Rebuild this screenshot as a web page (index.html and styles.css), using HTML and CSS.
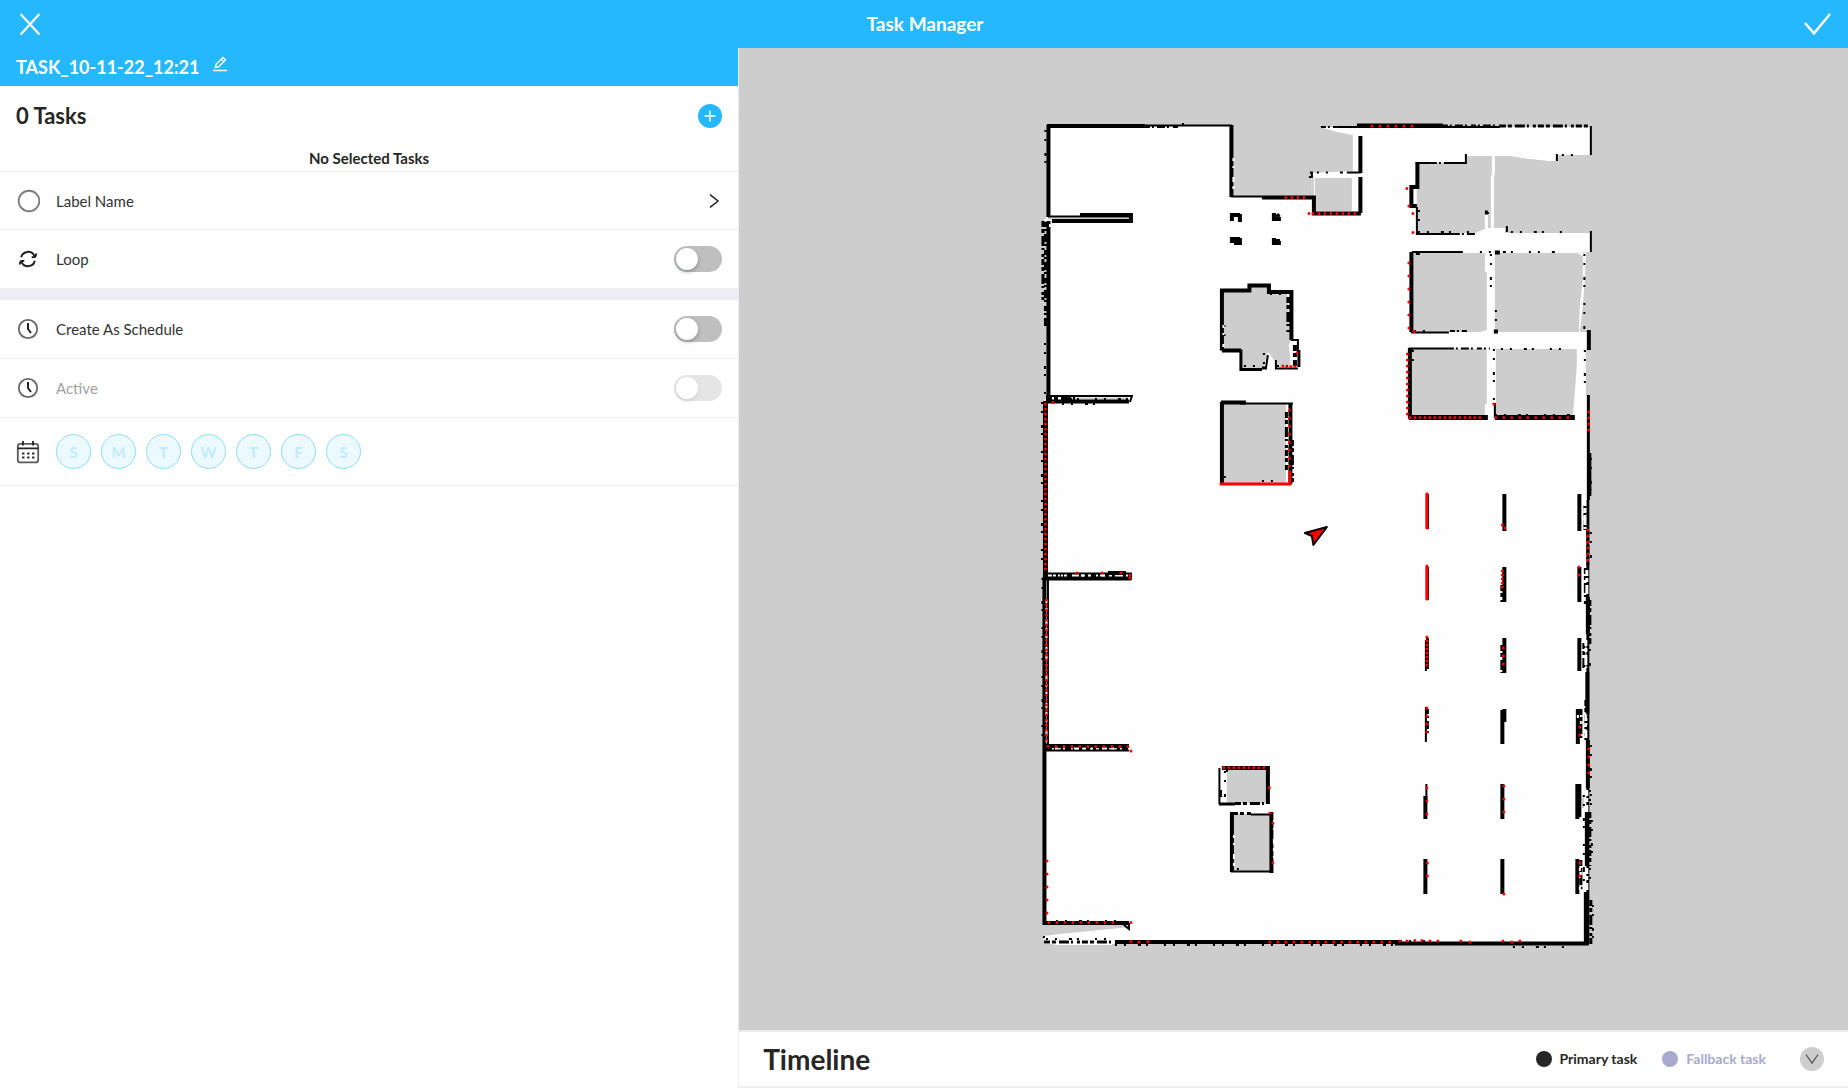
FILE: index.html
```html
<!DOCTYPE html>
<html lang="en">
<head>
<meta charset="utf-8">
<meta name="viewport" content="width=device-width, initial-scale=1">
<title>Task Manager</title>
<link rel="stylesheet" href="styles.css">
</head>
<body>
<header class="topbar">
  <button class="icon-btn" type="button" aria-label="Close">
    <svg width="24" height="24" viewBox="0 0 24 24" fill="none" stroke="currentColor" stroke-width="2.200"><path d="M2.600 2 21.400 22.500M21.400 2 2.600 22.500"/></svg>
  </button>
  <h1 class="topbar-title">Task Manager</h1>
  <button class="icon-btn icon-btn-end" type="button" aria-label="Save">
    <svg width="28" height="24" viewBox="0 0 28 24" fill="none" stroke="currentColor" stroke-width="2.500"><path d="M1 11 10 21.300 26 2"/></svg>
  </button>
</header>

<main class="workspace">
  <section class="panel">
    <div class="task-name">
      <h2 class="task-name-text">TASK_10-11-22_12:21</h2>
      <button class="icon-btn edit-btn" type="button" aria-label="Rename task">
        <svg width="16" height="16" viewBox="0 0 16 16" fill="none" stroke="currentColor" stroke-width="1.300"><path d="M1 14.500H15M3.300 11.500 4.200 8.200 11 1.500 13.500 3.800 6.700 10.600ZM9.300 3.300 11.700 5.600"/></svg>
      </button>
    </div>

    <div class="tasks-head">
      <h3 class="tasks-count">0 Tasks</h3>
      <button class="add-btn" type="button" aria-label="Add task">
        <svg width="12" height="12" viewBox="0 0 12 12" fill="none" stroke="currentColor" stroke-width="1.400"><path d="M6 .5V11.500M.5 6H11.500"/></svg>
      </button>
    </div>
    <p class="tasks-empty">No Selected Tasks</p>

    <a class="row" href="#label">
      <span class="row-icon"><svg width="24" height="24" viewBox="0 0 24 24" fill="none" stroke="#808080" stroke-width="1.900"><circle cx="13" cy="12" r="10.300"/></svg></span>
      <span class="row-label">Label Name</span>
      <svg class="chevron" width="12" height="16" viewBox="0 0 12 16" fill="none" stroke="currentColor" stroke-width="1.500"><path d="M2 1.600 10 8 2 14.400"/></svg>
    </a>
    <div class="row">
      <span class="row-icon"><svg width="24" height="24" viewBox="0 0 24 24" fill="none" stroke="#222" stroke-width="2"><path d="M5.200 10.300A7 7 0 0 1 18.500 9.200M18.800 13.700A7 7 0 0 1 5.500 14.800M15.700 10.200 19.200 9.800 20.500 6.500M8.300 13.800 4.800 14.200 3.500 17.500"/></svg></span>
      <label class="row-label" for="loop">Loop</label>
      <input class="switch" id="loop" type="checkbox">
    </div>
    <div class="band"></div>
    <div class="row row-line">
      <span class="row-icon"><svg width="24" height="24" viewBox="0 0 24 24" fill="none"><circle cx="12" cy="12" r="9.200" stroke="#66666b" stroke-width="1.800"/><path d="M12 6V12L15 16" stroke="#222" stroke-width="2"/></svg></span>
      <label class="row-label" for="schedule">Create As Schedule</label>
      <input class="switch" id="schedule" type="checkbox">
    </div>
    <div class="row row-line">
      <span class="row-icon"><svg width="24" height="24" viewBox="0 0 24 24" fill="none"><circle cx="12" cy="12" r="9.200" stroke="#66666b" stroke-width="1.800"/><path d="M12 6V12L15 16" stroke="#222" stroke-width="2"/></svg></span>
      <label class="row-label row-label-off" for="active">Active</label>
      <input class="switch" id="active" type="checkbox" disabled>
    </div>
    <div class="row row-days">
      <span class="row-icon"><svg width="24" height="24" viewBox="0 0 24 24" fill="none"><rect x="1.800" y="3.800" width="20.400" height="18.600" rx="2.500" stroke="#5a5a5f" stroke-width="1.800"/><path d="M1.500 8.300H22.500M7 1V5.500M17 1V5.500" stroke="#222" stroke-width="1.800"/><path d="M6 13.500H8.500M11 13.500H13.500M16 13.500H18.500M6 17.500H8.500M11 17.500H13.500M16 17.500H18.500" stroke="#333" stroke-width="2"/></svg></span>
      <div class="days">
        <button class="day" type="button" disabled>S</button>
        <button class="day" type="button" disabled>M</button>
        <button class="day" type="button" disabled>T</button>
        <button class="day" type="button" disabled>W</button>
        <button class="day" type="button" disabled>T</button>
        <button class="day" type="button" disabled>F</button>
        <button class="day" type="button" disabled>S</button>
      </div>
    </div>
  </section>

  <section class="stage">
    <div class="map">
      <svg class="map-svg" viewBox="739 48 1109 982" fill="none" role="img" aria-label="Floor map">
        <!-- free space -->
        <path class="free" d="M1048 126H1232V197H1312V173L1353 171V135L1337 132 1320 127H1591V155H1557V161L1548 161 1528 159 1509 156H1466V163H1417V233H1591V252H1577L1586 253V256L1585 280 1583 305 1580 332H1591V349H1586V395L1589 397V944H1044V937L1054 935 1083 932 1129 927 1128 924H1045V578H1044V400L1048 396V222L1044 220 1048 216Z"/>
        <path class="free" d="M1312 173H1361V214H1312ZM1353 135H1361V173H1353ZM1044 936 1060 934 1112 929V945H1056L1044 942Z"/>

        <!-- unknown space inside the free area -->
        <g class="unknown">
          <path d="M1315 178H1352V211H1315Z"/>
          <path d="M1417 164H1466V156H1493V175L1491 176V228L1488 228V212H1485V229L1475 232H1417Z"/>
          <path d="M1495 156H1509L1528 159 1548 161H1557V155L1591 155V232H1505V227L1494 228 1495 175Z"/>
          <path d="M1413 253H1485V271L1487 273V330L1480 332H1413Z"/>
          <path d="M1495 253H1577L1583 256V280L1580 305 1579 332H1495Z"/>
          <path d="M1411 349H1487V403L1485 405V416H1411Z"/>
          <path d="M1496 349H1577V365L1575 391 1573 416H1496Z"/>
          <path d="M1222 290H1249V285H1269V291H1287L1291 340 1289 345 1291 367H1276L1275 361 1268 352 1264 368H1242V350H1222Z"/>
          <path d="M1222 403H1286V483H1222Z"/>
          <path d="M1227 770H1267V803H1227ZM1234 814H1270V871H1234Z"/>
        </g>
        <path class="free" d="M1492 155H1495V175L1494 177V228H1505V233H1475L1485 229V212H1488V228H1491V176L1492 174Z"/>
        <path class="shade" d="M1048 218.500H1129M1064 398.500H1128M1054 749H1118M1313 178V196M1581 520V525M1582 710V725M1583 795V808M1582 870V890"/>

        <!-- west wing walls -->
        <path class="w4" d="M1048.500 125V217M1048.500 221V396M1044.500 577V925"/>
        <path class="w5" d="M1045.500 401V578"/>
        <path class="w4" d="M1047 126H1145M1046 401.500H1129M1046 578.500H1131M1046 746H1129M1044 923H1129"/>
        <path class="w4" d="M1080 215H1131V221H1052"/>
        <path class="w2" d="M1145 125.500H1232M1048 216.500H1131M1046 396H1132L1130 402M1048 573.500H1131V580M1046 750.500H1129M1129 923V929L1124 925M1048 577V746M1183 123V125"/>
        <path class="w2 d-a" d="M1145 127H1180M1232 155V190"/>
        <path class="w2 d-c" d="M1045.500 130V170"/>
        <path class="w3 d-b" d="M1043 221V300"/>
        <path class="w3 d-a" d="M1045.500 222V327"/>
        <path class="w2 d-c" d="M1045 343V396M1042 402V570M1042.500 578V746M1046 399H1130M1062 404H1104"/>
        <path class="w4 d-b" d="M1046 399H1078M1052 575H1129M1046 749H1128"/>
        <path class="white2 d-d" d="M1053 575.500H1122M1055 748.500H1118M1046.500 600V742M1050 224V232"/>
        <path class="w4" d="M1231.500 125V197M1108 573H1126"/>
        <path class="white2 d-d" d="M1233.500 158V194"/>

        <!-- south wall -->
        <path class="w4" d="M1115 942H1400"/>
        <path class="w4" d="M1395 943.500H1589"/>
        <path class="w3 d-b" d="M1044 942H1115"/>
        <path class="w2 d-c" d="M1044 936V944M1046 939H1112M1115 945H1400M1056 921H1128M1400 941H1425M1513 947H1570"/>

        <!-- central columns and rooms -->
        <path class="w4" d="M1230 215H1240M1232 213V221M1240 214V222M1230 239H1240M1232 237V243M1234 243H1242M1240 238V244M1274 213V219H1281M1277 214 1279 217M1274 238V243H1281M1276 241H1280"/>
        <path class="w4" d="M1222 350V290.500H1249.500V285.500H1269V292H1291.500V340"/>
        <path class="w2" d="M1291 340H1298V353M1220 349.500H1241M1276 360V368.500H1298M1266 368 1268 355"/>
        <path class="w3" d="M1222 351H1241V369.500H1262M1262 368H1267M1299 350V367"/>
        <path class="w4 d-b" d="M1288.500 297V332M1295 345V366"/>
        <path class="w2 d-c" d="M1224.500 325V348M1244 366H1266M1264 353V367M1277 366H1296M1270 294H1285"/>
        <path class="white2 d-d" d="M1223.500 325V347"/>
        <path class="w4" d="M1222 402V484M1221 402.500H1246M1290.500 404V484"/>
        <path class="w2" d="M1240 403.500H1293"/>
        <path class="white2 d-d" d="M1287.500 408V470"/>
        <path class="w3 d-b" d="M1286.500 412V470M1292.500 440V482"/>
        <path class="w2 d-c" d="M1262 481H1285M1225 476V482"/>
        <path class="w4" d="M1222 768H1270M1268 768V804M1232 812V872M1271.500 812V873"/>
        <path class="w2" d="M1219.500 768V804M1251 814.500H1271M1231 871.500H1272"/>
        <path class="w3" d="M1219 804H1235M1221 790V797"/>
        <path class="w3 d-b" d="M1235 803.500H1268M1232 813.500H1251"/>
        <path class="white3 d-b" d="M1223.500 771V801"/>
        <path class="white2 d-d" d="M1234 835V870M1274 820V862"/>
        <path class="w2 d-c" d="M1225 771V801M1226 771H1233M1238 868V871"/>

        <!-- north-east rooms -->
        <path class="w2" d="M1337 127H1500M1591 126V155M1557 154V161M1591 231V252M1466 154V163H1445M1347 172.500H1361M1231 196.500H1262M1455 234H1417V207M1412 252H1463M1411 332.500H1449M1409 348.500H1449M1507 226V232M1495 403V418"/>
        <path class="w4" d="M1357 125.500H1443M1360.500 136V173M1360.500 177V213M1262 197.500H1314V213.500H1361M1417.500 162V187H1411.500V206H1417M1411.500 252V332M1410 348V419M1589 330V350"/>
        <path class="w5" d="M1409 417.500H1488M1495 417.500H1575"/>
        <path class="w2" d="M1416 163H1432M1416 254H1420M1410 350H1413M1310 172.500H1312V177H1309"/>
        <path class="w2 d-a" d="M1321 127H1337M1443 125.500H1500M1432 163H1466M1455 234H1477M1449 348.500H1490M1450 331H1467"/>
        <path class="w3 d-b" d="M1500 126H1588"/>
        <path class="w2 d-c" d="M1317 172.500H1346M1562 155H1579M1419 210V234M1418 232H1475M1511 232H1566M1480 252H1556M1414 331H1432M1413 350V370M1501 349H1572M1491 254V292M1496 310V330M1494 349V403M1584.500 254V330M1585 350V395M1488 212V216M1495 415H1575"/>
        <path class="w4" d="M1494 331.500H1498M1495 252.500H1500M1485 212.500H1488"/>

        <!-- racks -->
        <path class="w3" d="M1427.500 494V529M1427.500 567V600M1427.500 638V669"/>
        <path class="w2" d="M1426 640V671M1426 707V742M1426.500 784V800"/>
        <path class="w2 d-a" d="M1428 709V736"/>
        <path class="w4" d="M1504.500 494V531M1504.500 567V602M1504.500 638V673M1502.500 710V744M1504.500 709V722M1502.500 784V819M1502.500 859V894M1425.500 796V819M1425.500 859V894M1579.500 494V531M1579.500 567V602M1579.500 638V671M1578 709V744M1579.500 784V817M1577.500 784V819M1577.500 859V894"/>
        <path class="w3 d-b" d="M1502 585V602M1502 645V673M1581 709V740M1581 860V892"/>
        <path class="white2 d-d" d="M1578 715V722M1580 868V890"/>

        <!-- east wall -->
        <path class="w3" d="M1588.500 395V500M1588 500V944"/>
        <path class="w4" d="M1589.500 453V496M1588 597V634M1587.500 672V713M1588 740V788M1587 812V866M1586 892V944"/>
        <path class="w3 d-b" d="M1588 530V565M1585 505V530M1585.500 568V604M1590 600V645M1584 643V668M1586 700V740M1590 812V866M1591 900V944"/>
        <path class="white3 d-b" d="M1585 500V530M1587 570V594M1586 640V668M1586 715V738M1587 790V812M1587 868V890"/>
        <path class="w2 d-c" d="M1591 458V490M1591 532V562M1590 640V670M1588 716V742M1591 745V812M1590 790V812M1584 795V870M1590 868V890M1584 870V890M1592 820V860M1593 905V940"/>

        <!-- laser hits -->
        <path class="hit s5" d="M1045.500 404V570M1046.500 600V744"/>
        <path class="hit s8" d="M1048 746.500H1129M1049 922.500H1121M1270 942H1392"/>
        <path class="hit s6" d="M1313 213.500H1356M1286 197.500H1306M1407.500 354V418M1589 412V432M1588 530V564"/>
        <path class="hit s8" d="M1372 126H1418M1496 417.500H1570"/>
        <path class="hit s5" d="M1410 417.500H1484M1224 767.500H1269"/>
        <path class="hit s13" d="M1409 263V333M1047 861V914"/>
        <path class="hit s8" d="M1289.500 410V470"/>
        <path class="hit-line" d="M1221 484H1290V472M1427 494V528M1427 566V599"/>
        <path class="hit s4" d="M1427 637V669M1502.500 571V588"/>
        <path class="hit s8" d="M1427 708V740M1503.500 648V670M1589 749V775M1579 567V578M1580 727V736"/>
        <path class="hit s13" d="M1427 788V816M1504 786V818M1427.500 863V888M1580 863V878"/>
        <path class="hit" d="M1053 402.500h0M1077 573h0M1102 573h0M1121 573h0M1130 575h0M1130 578h0M1131 751h0M1131 922.500h0M1131 941.500h0M1139 942h0M1148 941.500h0M1400 941h0M1407 941h0M1415 940.500h0M1422 940.500h0M1430 941h0M1438 941h0M1461 941h0M1470 942h0M1503 941h0M1512 942h0M1520 941h0M1297 353h0M1283 366h0M1287 367h0M1291 366.500h0M1295 366.500h0M1309 213.500h0M1407 188.500h0M1409 206h0M1413 213.500h0M1413 232.500h0M1414 331.500h0M1494 404h0M1502.500 525h0M1505 528h0M1504 894h0M1269.500 787.500h0M1270 813h0M1273 823h0M1273 863h0"/>

        <!-- robot -->
        <path class="robot" d="M1305 533 1327 527 1313.500 545 1312 536Z"/>
      </svg>
    </div>
    <footer class="timeline">
      <h2 class="timeline-title">Timeline</h2>
      <ul class="legend">
        <li class="legend-item"><span class="dot"></span>Primary task</li>
        <li class="legend-item legend-fallback"><span class="dot"></span>Fallback task</li>
      </ul>
      <button class="collapse-btn" type="button" aria-label="Collapse timeline">
        <svg width="14" height="12" viewBox="0 0 14 12" fill="none" stroke="currentColor" stroke-width="1.300"><path d="M1 1.500 7 10 13 1.500"/></svg>
      </button>
    </footer>
  </section>
</main>
</body>
</html>
```
FILE: styles.css
```css
*, *::before { box-sizing: border-box; }

body {
  margin: 0;
  min-height: 100vh;
  display: flex;
  flex-direction: column;
  background: #fff;
  color: #262626;
  font: 15px/24px Lato, "Noto Sans", sans-serif;
}

h1, h2, h3, p, ul { margin: 0; padding: 0; }
button { font: inherit; color: inherit; border: 0; padding: 0; background: none; cursor: pointer; }
svg { display: block; flex: none; }

.topbar {
  display: grid;
  grid-template-columns: 1fr auto 1fr;
  align-items: center;
  height: 48px;
  padding: 0 16px 0 18px;
  background: #25b8ff;
  color: #fff;
}
.topbar-title { font-size: 19px; font-weight: 700; line-height: 24px; }
.icon-btn { display: flex; justify-self: start; }
.icon-btn-end { justify-self: end; }

.workspace { flex: 1; display: flex; }

.panel {
  width: 40%;
  border-right: 1px solid #ededf3;
}
.task-name {
  display: flex;
  align-items: center;
  gap: 12px;
  height: 38px;
  padding: 0 16px;
  background: #25b8ff;
  color: #fff;
}
.task-name-text { font-size: 18px; font-weight: 700; line-height: 24px; }
.edit-btn { padding-bottom: 6px; }

.tasks-head {
  display: flex;
  align-items: center;
  justify-content: space-between;
  height: 60px;
  padding: 0 16px;
}
.tasks-count { font-size: 22px; font-weight: 700; line-height: 28px; }
.add-btn {
  display: grid;
  place-items: center;
  width: 24px;
  height: 24px;
  border-radius: 50%;
  background: #25b8ff;
  color: #fff;
}
.tasks-empty {
  height: 26px;
  border-bottom: 1px solid #ececec;
  text-align: center;
  font-weight: 700;
}

.row {
  display: flex;
  align-items: center;
  gap: 16px;
  height: 58px;
  padding: 0 16px;
  color: #333;
  text-decoration: none;
}
a.row { border-bottom: 1px solid #ececec; }
.row-line { height: 59px; border-bottom: 1px solid #ececf1; }
.row-days { height: 68px; border-bottom: 1px solid #ececec; }
.row-icon { display: flex; }
.row-label { flex: 1; }
.row-label-off { color: #a0a0a0; }
.chevron { margin-right: 2px; color: #222; }
.band { height: 12px; background: #ededf3; }

.switch {
  appearance: none;
  width: 48px;
  height: 26px;
  margin: 0;
  padding: 2px;
  border-radius: 13px;
  background: #bfbfbf;
}
.switch::before {
  content: "";
  display: block;
  width: 22px;
  height: 22px;
  border-radius: 50%;
  background: #fff;
  box-shadow: 0 2px 4px rgba(0, 35, 11, .3);
}
.switch:checked { background: #25b8ff; }
.switch:checked::before { margin-left: auto; }
.switch:disabled { opacity: .4; }

.days { display: flex; gap: 10px; }
.day {
  width: 35px;
  height: 35px;
  border: 1px solid #8fdcfb;
  border-radius: 50%;
  background: #ecfaff;
  color: #c2eaff;
  font-weight: 700;
}

.stage {
  flex: 1;
  display: flex;
  flex-direction: column;
}
.map {
  flex: 1;
  display: flex;
  background: #cdcdcd;
}
.map-svg { flex: 1; width: 100%; min-width: 0; }

.free { fill: #fefefe; }
.unknown { fill: #cdcdcd; }
.shade { stroke: #cdcdcd; stroke-width: 2px; }
.w2, .w3, .w4, .w5 { stroke: #000; }
.w2, .white2 { stroke-width: 2px; }
.w3, .white3 { stroke-width: 3px; }
.w4 { stroke-width: 4px; }
.w5 { stroke-width: 5px; }
.white2, .white3 { stroke: #fefefe; }
.d-a { stroke-dasharray: 5 2 2 3 8 2 2 4; }
.d-b { stroke-dasharray: 6 2 4 3 10 2 2 4 3 2; }
.d-c { stroke-dasharray: 2 7 2 12 3 5 2 16; }
.d-d { stroke-dasharray: 3 5 2 9 5 4; }
.hit, .hit-line { stroke: #f00; stroke-width: 3px; stroke-linecap: round; }
.s4 { stroke-dasharray: 0 4; }
.s5 { stroke-dasharray: 0 5; }
.s6 { stroke-dasharray: 0 6; }
.s8 { stroke-dasharray: 0 8; }
.s13 { stroke-dasharray: 0 13; }
.robot { fill: #f00; stroke: #000; stroke-width: 2px; stroke-linejoin: round; }

.timeline {
  display: flex;
  align-items: center;
  gap: 34px;
  height: 58px;
  padding: 0 24px;
  border: solid #ededf3;
  border-width: 2px 0;
  background: #fff;
}
.timeline-title { flex: 1; font-size: 28px; font-weight: 700; line-height: 36px; }
.legend { display: flex; gap: 25px; list-style: none; font-size: 14px; font-weight: 700; line-height: 20px; }
.legend-item { display: flex; align-items: center; gap: 8px; }
.dot { width: 16px; height: 16px; border-radius: 50%; background: currentColor; }
.legend-fallback { color: #a9a9cf; }
.collapse-btn {
  display: grid;
  place-items: center;
  width: 24px;
  height: 24px;
  border-radius: 50%;
  background: #cdcdcd;
  color: #555;
}
```
